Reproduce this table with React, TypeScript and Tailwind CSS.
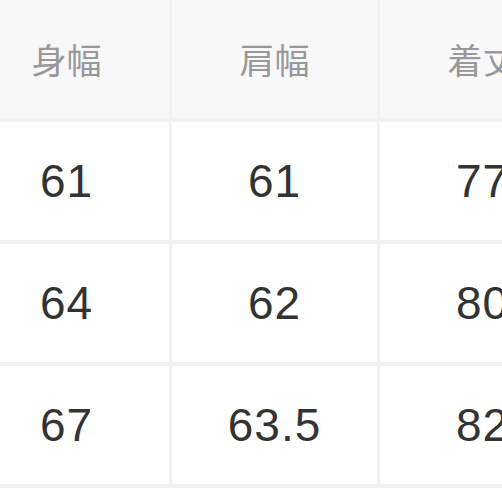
import React from 'react';

const headers = ['身幅', '肩幅', '着丈'];

const rows = [
  ['61', '61', '77'],
  ['64', '62', '80'],
  ['67', '63.5', '82'],
];

const App = () => {
  return (
    <div className="w-[502px] h-[502px] overflow-hidden bg-white">
      <div className="ml-[-36px] w-max grid grid-cols-[205px_205px_205px] gap-x-[3px] gap-y-[4px] pb-[4px] bg-[#f1f1f1]">
        {headers.map((h) => (
          <div
            key={h}
            className="h-[118px] flex items-center justify-center bg-[#f8f8f8] text-[35px] text-[#999999] font-['Noto_Sans_CJK_JP',sans-serif]"
          >
            {h}
          </div>
        ))}
        {rows.map((row, i) =>
          row.map((v, j) => (
            <div
              key={`${i}-${j}`}
              className="h-[118px] flex items-center justify-center bg-white text-[46px] tracking-[1px] text-[#333333] font-['Liberation_Sans',Arial,sans-serif]"
            >
              {v}
            </div>
          ))
        )}
      </div>
    </div>
  );
};

export default App;
